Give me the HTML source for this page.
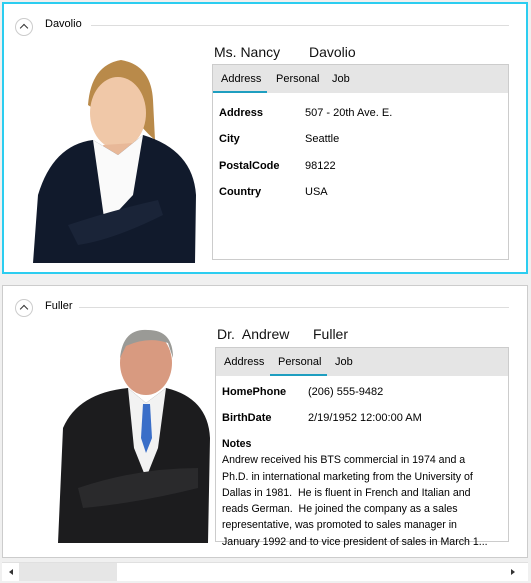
<!DOCTYPE html>
<html><head><style>
body{margin:0;width:531px;height:583px;background:#f0f0f0;font-family:"Liberation Sans",sans-serif;color:#000;position:relative;overflow:hidden}
.card{position:absolute;left:2px;width:524px;background:#fff;border:1px solid #ccc}
.c1{top:2px;height:270px;border:1px solid #2ccdf0;box-shadow:inset 0 0 0 1px #2ccdf0}
.c2{top:285px;height:271px}
.ab{position:absolute}
.tg{width:18px;height:18px;border:1px solid #ccc;border-radius:50%;box-sizing:border-box}
.tg:after{content:"";position:absolute;left:5px;top:6px;width:5px;height:5px;border-left:1.5px solid #333;border-top:1.5px solid #333;transform:rotate(45deg)}
.hl{height:1px;background:#ddd}
.t{font-size:11px;white-space:nowrap}
.nm{font-size:14px;color:#111}
.panel{border:1px solid #ccc;background:#fff;box-sizing:border-box}
.tabs{position:absolute;left:0;top:0;right:0;height:28px;background:#e5e5e5}
.tab{position:absolute;top:8px;font-size:11px}
.ul{position:absolute;top:26px;height:2px;background:#1e9ec0}
b{font-weight:bold}
</style></head><body>
<div class="card c1">
 <div class="ab tg" style="left:12px;top:15px"></div>
 <div class="ab t" style="left:42px;top:15px">Davolio</div>
 <div class="ab hl" style="left:88px;top:22px;width:418px"></div>
 <div class="ab nm" style="left:211px;top:41px">Ms. Nancy</div>
 <div class="ab nm" style="left:306px;top:41px">Davolio</div>
 <svg class="ab" style="left:30px;top:52px" width="165" height="208" viewBox="0 0 165 208">
  <path d="M55 50 Q58 10 88 5 Q118 10 120 45 L122 85 Q110 75 100 60 L70 60 Z" fill="#b98a4a"/>
  <ellipse cx="85" cy="58" rx="28" ry="36" fill="#f0c8a8"/>
  <path d="M70 90 L100 88 L105 110 L75 112 Z" fill="#e8b898"/>
  <path d="M0 208 L5 140 Q20 90 60 85 L85 100 L110 80 Q160 95 163 140 L162 208 Z" fill="#111a2c"/>
  <path d="M60 85 L85 100 L110 80 L100 140 L72 170 L65 120 Z" fill="#fafafa"/>
  <path d="M35 170 Q80 155 125 145 L130 160 Q80 185 45 190 Z" fill="#1a2438"/>
 </svg>
 <div class="ab panel" style="left:209px;top:61px;width:297px;height:196px">
  <div class="tabs"></div>
  <div class="tab" style="left:8px">Address</div>
  <div class="tab" style="left:63px">Personal</div>
  <div class="tab" style="left:119px">Job</div>
  <div class="ul" style="left:0;width:54px"></div>
  <div class="ab t" style="left:6px;top:42px"><b>Address</b></div><div class="ab t" style="left:92px;top:42px">507 - 20th Ave. E.</div>
  <div class="ab t" style="left:6px;top:68px"><b>City</b></div><div class="ab t" style="left:92px;top:68px">Seattle</div>
  <div class="ab t" style="left:6px;top:95px"><b>PostalCode</b></div><div class="ab t" style="left:92px;top:95px">98122</div>
  <div class="ab t" style="left:6px;top:121px"><b>Country</b></div><div class="ab t" style="left:92px;top:121px">USA</div>
 </div>
</div>
<div class="card c2">
 <div class="ab tg" style="left:12px;top:13px"></div>
 <div class="ab t" style="left:42px;top:14px">Fuller</div>
 <div class="ab hl" style="left:76px;top:21px;width:430px"></div>
 <div class="ab nm" style="left:214px;top:40px">Dr.&nbsp; Andrew</div>
 <div class="ab nm" style="left:310px;top:40px">Fuller</div>
 <svg class="ab" style="left:55px;top:42px" width="155" height="215" viewBox="0 0 155 215">
  <ellipse cx="88" cy="35" rx="26" ry="32" fill="#d89a80"/>
  <path d="M62 30 Q65 0 90 2 Q115 2 115 30 L110 15 Q90 8 68 18 Z" fill="#9a9a96"/>
  <path d="M0 215 L5 100 Q20 65 70 60 L88 75 L108 60 Q150 70 152 110 L150 215 Z" fill="#1c1c1e"/>
  <path d="M70 60 L88 75 L108 60 L100 120 L88 150 L76 120 Z" fill="#f2f2f2"/>
  <path d="M85 76 L92 76 L94 110 L88 125 L83 110 Z" fill="#3a6ec8"/>
  <path d="M20 160 Q80 140 140 140 L140 160 Q80 175 25 180 Z" fill="#2a2a2c"/>
 </svg>
 <div class="ab panel" style="left:212px;top:61px;width:294px;height:195px">
  <div class="tabs"></div>
  <div class="tab" style="left:8px">Address</div>
  <div class="tab" style="left:62px">Personal</div>
  <div class="tab" style="left:119px">Job</div>
  <div class="ul" style="left:54px;width:57px"></div>
  <div class="ab t" style="left:6px;top:38px"><b>HomePhone</b></div><div class="ab t" style="left:92px;top:38px">(206) 555-9482</div>
  <div class="ab t" style="left:6px;top:64px"><b>BirthDate</b></div><div class="ab t" style="left:92px;top:64px">2/19/1952 12:00:00 AM</div>
  <div class="ab t" style="left:6px;top:88px;line-height:16.3px;font-size:10.6px"><b>Notes</b><br>Andrew received his BTS commercial in 1974 and a<br>Ph.D. in international marketing from the University of<br>Dallas in 1981.&nbsp; He is fluent in French and Italian and<br>reads German.&nbsp; He joined the company as a sales<br>representative, was promoted to sales manager in<br>January 1992 and to vice president of sales in March 1...</div>
 </div>
</div>
<div class="ab" style="left:2px;top:562px;width:526px;height:18px;background:#fff;border-top:1px solid #e0e0e0">
 <div class="ab" style="left:17px;top:0;width:98px;height:18px;background:#e6e6e6"></div>
 <div class="ab" style="left:7px;top:6px;width:0;height:0;border-top:3.5px solid transparent;border-bottom:3.5px solid transparent;border-right:4px solid #333"></div>
 <div class="ab" style="left:509px;top:6px;width:0;height:0;border-top:3.5px solid transparent;border-bottom:3.5px solid transparent;border-left:4px solid #333"></div>
</div>
</body></html>
